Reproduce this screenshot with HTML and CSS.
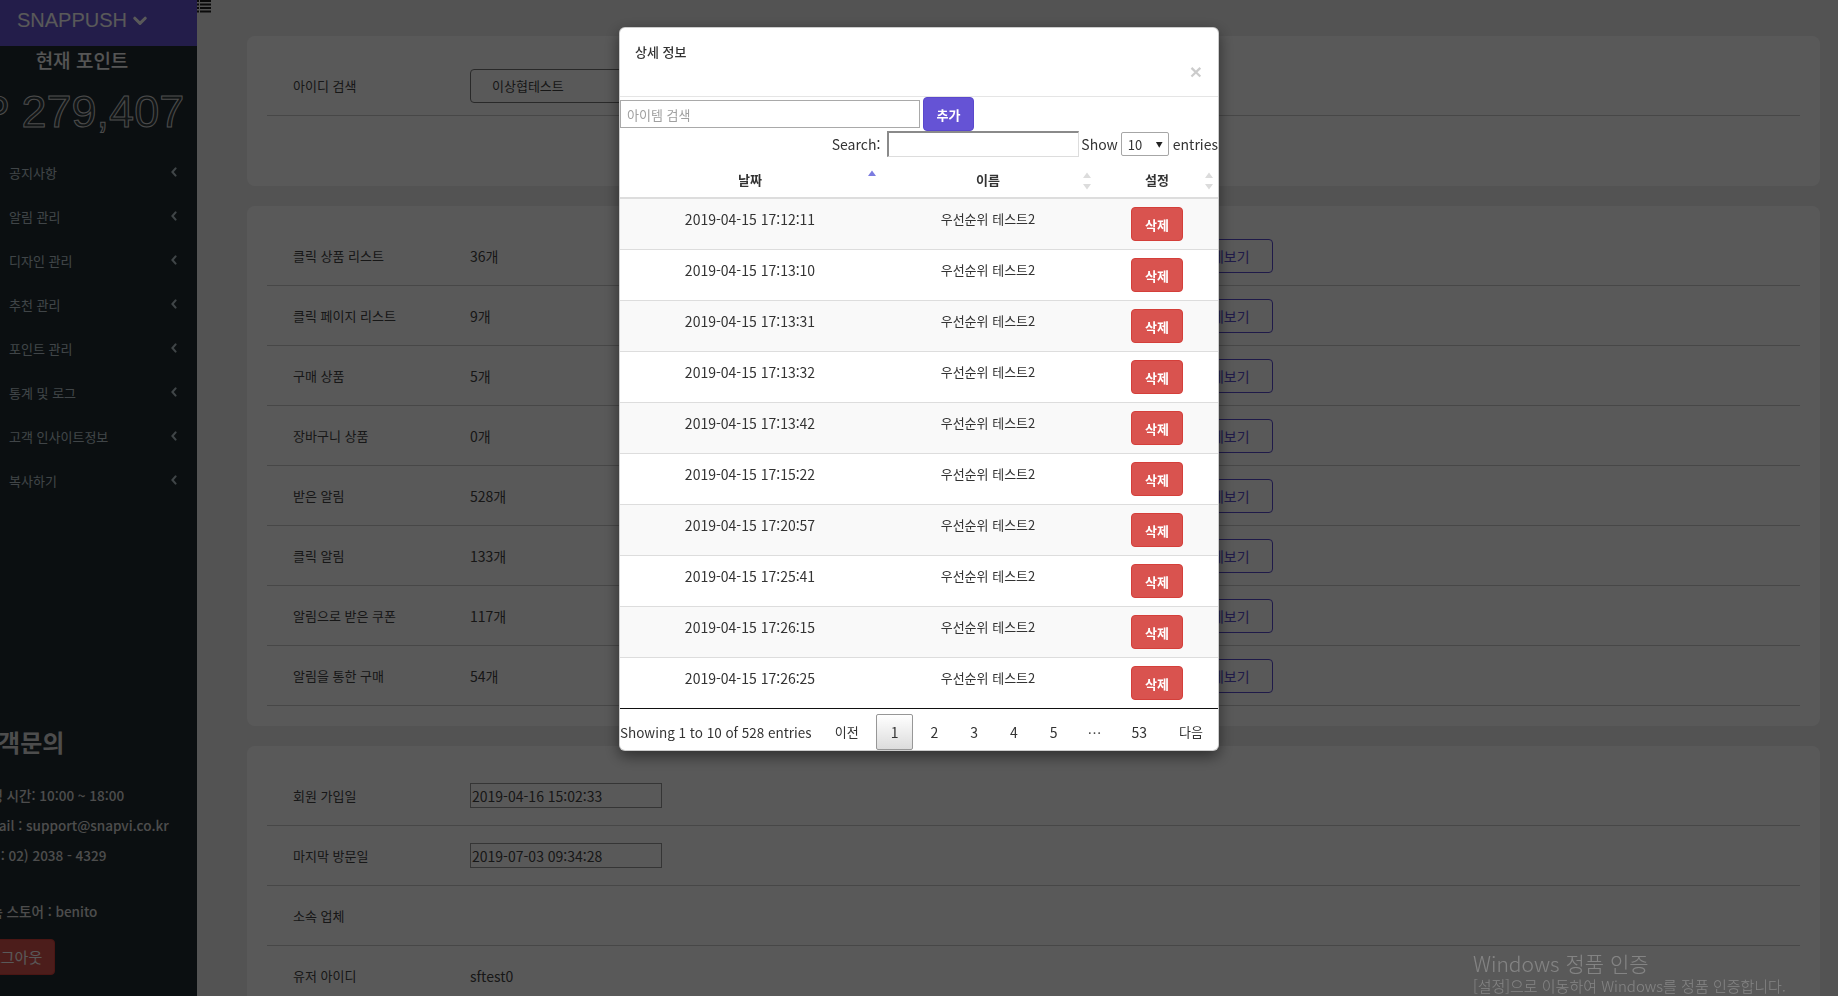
FILE: index.html
```html
<!DOCTYPE html>
<html lang="ko">
<head>
<meta charset="utf-8">
<title>SNAPPUSH</title>
<link rel="stylesheet" href="styles.css">
</head>
<body>
<div class="app">
  <aside class="sidebar">
    <div class="sidebar-inner">
      <div class="brand"><span>SNAPPUSH</span><svg class="caret" width="14" height="10" viewBox="0 0 14 10"><path d="M1.8 2.2 L7 7.4 L12.2 2.2" fill="none" stroke="currentColor" stroke-width="3" stroke-linecap="round" stroke-linejoin="round"/></svg></div>
      <div class="point-title">현재 포인트</div>
      <div class="point-value">P 279,407</div>
      <ul class="menu">
        <li><span>공지사항</span><svg viewBox="0 0 6 10"><path d="M4.6 1.4 L1.4 5 L4.6 8.6" fill="none" stroke="currentColor" stroke-width="2" stroke-linecap="round"/></svg></li>
        <li><span>알림 관리</span><svg viewBox="0 0 6 10"><path d="M4.6 1.4 L1.4 5 L4.6 8.6" fill="none" stroke="currentColor" stroke-width="2" stroke-linecap="round"/></svg></li>
        <li><span>디자인 관리</span><svg viewBox="0 0 6 10"><path d="M4.6 1.4 L1.4 5 L4.6 8.6" fill="none" stroke="currentColor" stroke-width="2" stroke-linecap="round"/></svg></li>
        <li><span>추천 관리</span><svg viewBox="0 0 6 10"><path d="M4.6 1.4 L1.4 5 L4.6 8.6" fill="none" stroke="currentColor" stroke-width="2" stroke-linecap="round"/></svg></li>
        <li><span>포인트 관리</span><svg viewBox="0 0 6 10"><path d="M4.6 1.4 L1.4 5 L4.6 8.6" fill="none" stroke="currentColor" stroke-width="2" stroke-linecap="round"/></svg></li>
        <li><span>통계 및 로그</span><svg viewBox="0 0 6 10"><path d="M4.6 1.4 L1.4 5 L4.6 8.6" fill="none" stroke="currentColor" stroke-width="2" stroke-linecap="round"/></svg></li>
        <li><span>고객 인사이트정보</span><svg viewBox="0 0 6 10"><path d="M4.6 1.4 L1.4 5 L4.6 8.6" fill="none" stroke="currentColor" stroke-width="2" stroke-linecap="round"/></svg></li>
        <li><span>복사하기</span><svg viewBox="0 0 6 10"><path d="M4.6 1.4 L1.4 5 L4.6 8.6" fill="none" stroke="currentColor" stroke-width="2" stroke-linecap="round"/></svg></li>
      </ul>
      <div class="contact">
        <h3>고객문의</h3>
        <p class="hours">운영 시간: 10:00 ~ 18:00</p>
        <p>Email : support@snapvi.co.kr</p>
        <p>Tel : 02) 2038 - 4329</p>
        <p class="store">소속 스토어 : benito</p>
        <button class="logout" type="button">로그아웃</button>
      </div>
    </div>
  </aside>

  <main class="main">
    <div class="toggle">
      <svg width="14" height="13" viewBox="0 0 14 13"><g fill="#222"><rect x="0" y="0" width="2" height="2"/><rect x="3" y="0" width="11" height="2"/><rect x="0" y="3.5" width="2" height="2"/><rect x="3" y="3.5" width="11" height="2"/><rect x="0" y="7" width="2" height="2"/><rect x="3" y="7" width="11" height="2"/><rect x="0" y="10.5" width="2" height="2"/><rect x="3" y="10.5" width="11" height="2"/></g></svg>
    </div>
    <div class="cards">
      <section class="card card-search">
        <div class="row">
          <div class="label">아이디 검색</div>
          <div class="value"><div class="id-box">이상협테스트</div></div>
        </div>
      </section>

      <section class="card">
        <div class="row"><div class="label">클릭 상품 리스트</div><div class="value">36개</div><button class="btn-detail" type="button">상세보기</button></div>
        <div class="row"><div class="label">클릭 페이지 리스트</div><div class="value">9개</div><button class="btn-detail" type="button">상세보기</button></div>
        <div class="row"><div class="label">구매 상품</div><div class="value">5개</div><button class="btn-detail" type="button">상세보기</button></div>
        <div class="row"><div class="label">장바구니 상품</div><div class="value">0개</div><button class="btn-detail" type="button">상세보기</button></div>
        <div class="row"><div class="label">받은 알림</div><div class="value">528개</div><button class="btn-detail" type="button">상세보기</button></div>
        <div class="row"><div class="label">클릭 알림</div><div class="value">133개</div><button class="btn-detail" type="button">상세보기</button></div>
        <div class="row"><div class="label">알림으로 받은 쿠폰</div><div class="value">117개</div><button class="btn-detail" type="button">상세보기</button></div>
        <div class="row"><div class="label">알림을 통한 구매</div><div class="value">54개</div><button class="btn-detail" type="button">상세보기</button></div>
      </section>

      <section class="card">
        <div class="row"><div class="label">회원 가입일</div><div class="value"><div class="date-box">2019-04-16 15:02:33</div></div></div>
        <div class="row"><div class="label">마지막 방문일</div><div class="value"><div class="date-box">2019-07-03 09:34:28</div></div></div>
        <div class="row"><div class="label">소속 업체</div><div class="value"></div></div>
        <div class="row"><div class="label">유저 아이디</div><div class="value">sftest0</div></div>
      </section>
    </div>
  </main>
</div>

<div class="backdrop"></div>

<div class="modal-layer">
  <div class="modal-content">
    <div class="modal-header">
      <div class="modal-title">상세 정보</div>
      <div class="close">×</div>
    </div>
    <div class="item-row">
      <div class="item-input">아이템 검색</div>
      <button class="btn-add" type="button">추가</button>
    </div>
    <div class="dt-controls">
      <span class="dt-label">Search:</span>
      <span class="dt-search"></span>
      <span class="dt-show">Show</span>
      <span class="dt-select"><span>10</span><span class="tri">▼</span></span>
      <span class="dt-entries">entries</span>
    </div>
    <table class="dt">
      <thead>
        <tr>
          <th class="c-date">날짜<svg class="sort" width="8" height="18" viewBox="0 0 8 18"><path d="M0 6 L4 0.5 L8 6 Z" fill="#7b7be0"/></svg></th>
          <th class="c-name">이름<svg class="sort" width="8" height="18" viewBox="0 0 8 18"><path d="M0 6 L4 0.5 L8 6 Z" fill="#dcdcdc"/><path d="M0 12 L8 12 L4 17.5 Z" fill="#dcdcdc"/></svg></th>
          <th class="c-set">설정<svg class="sort" width="8" height="18" viewBox="0 0 8 18"><path d="M0 6 L4 0.5 L8 6 Z" fill="#dcdcdc"/><path d="M0 12 L8 12 L4 17.5 Z" fill="#dcdcdc"/></svg></th>
        </tr>
      </thead>
      <tbody>
        <tr><td>2019-04-15 17:12:11</td><td>우선순위 테스트2</td><td><button class="btn-del" type="button">삭제</button></td></tr>
        <tr><td>2019-04-15 17:13:10</td><td>우선순위 테스트2</td><td><button class="btn-del" type="button">삭제</button></td></tr>
        <tr><td>2019-04-15 17:13:31</td><td>우선순위 테스트2</td><td><button class="btn-del" type="button">삭제</button></td></tr>
        <tr><td>2019-04-15 17:13:32</td><td>우선순위 테스트2</td><td><button class="btn-del" type="button">삭제</button></td></tr>
        <tr><td>2019-04-15 17:13:42</td><td>우선순위 테스트2</td><td><button class="btn-del" type="button">삭제</button></td></tr>
        <tr><td>2019-04-15 17:15:22</td><td>우선순위 테스트2</td><td><button class="btn-del" type="button">삭제</button></td></tr>
        <tr><td>2019-04-15 17:20:57</td><td>우선순위 테스트2</td><td><button class="btn-del" type="button">삭제</button></td></tr>
        <tr><td>2019-04-15 17:25:41</td><td>우선순위 테스트2</td><td><button class="btn-del" type="button">삭제</button></td></tr>
        <tr><td>2019-04-15 17:26:15</td><td>우선순위 테스트2</td><td><button class="btn-del" type="button">삭제</button></td></tr>
        <tr><td>2019-04-15 17:26:25</td><td>우선순위 테스트2</td><td><button class="btn-del" type="button">삭제</button></td></tr>
      </tbody>
    </table>
    <div class="dt-footer">
      <div class="dt-info">Showing 1 to 10 of 528 entries</div>
      <div class="pager">
        <span class="pg ko">이전</span>
        <span class="pg current">1</span>
        <span class="pg">2</span>
        <span class="pg">3</span>
        <span class="pg">4</span>
        <span class="pg">5</span>
        <span class="pg ellipsis">…</span>
        <span class="pg">53</span>
        <span class="pg ko">다음</span>
      </div>
    </div>
  </div>
</div>

<div class="activation">
  <div class="act-title">Windows 정품 인증</div>
  <div class="act-sub">[설정]으로 이동하여 Windows를 정품 인증합니다.</div>
</div>
</body>
</html>
```

FILE: styles.css
```css
* { box-sizing: border-box; }

html, body {
  margin: 0;
  padding: 0;
}

body {
  width: 1838px;
  height: 996px;
  overflow: hidden;
  background: #eeeeee;
  color: #333;
  font-family: "Noto Sans CJK KR", "Noto Sans", sans-serif;
}

.app {
  display: flex;
  height: 996px;
}

/* ---------- Sidebar ---------- */
.sidebar {
  width: 197px;
  flex: none;
  background: #222d32;
  overflow: hidden;
}

.sidebar-inner {
  width: 230px;
  margin-left: -33px;
}

.brand {
  height: 46px;
  background: #6654d4;
  color: #fff;
  display: flex;
  align-items: center;
  justify-content: center;
  gap: 6px;
  padding-bottom: 5px;
  font-family: "Liberation Sans", Arial, sans-serif;
  font-size: 20px;
}

.caret { display: block; }

.point-title {
  margin-top: 1px;
  text-align: center;
  font-size: 19px;
  font-weight: 500;
  line-height: 26px;
  color: #f2f2f2;
}

.point-value {
  margin-top: 13px;
  text-align: center;
  white-space: nowrap;
  font-family: "Liberation Sans", Arial, sans-serif;
  font-size: 45px;
  line-height: 52px;
  color: rgba(255, 255, 255, 0.08);
  -webkit-text-stroke: 1px #d8d8d8;
}

.menu {
  list-style: none;
  margin: 12px 0 0;
  padding: 0;
}

.menu li {
  height: 44px;
  display: flex;
  align-items: center;
  justify-content: space-between;
  padding: 0 20px 0 42px;
  font-size: 13px;
  color: #b8c7ce;
}

.menu svg {
  width: 6px;
  height: 10px;
  display: block;
}

.contact {
  margin-top: 225px;
  padding-left: 11px;
  color: #dddddd;
  white-space: nowrap;
}

.contact h3 {
  margin: 0 0 0 -2px;
  font-size: 24px;
  line-height: 30px;
  font-weight: 700;
}

.contact p {
  margin: 8px 0 0;
  font-size: 13.5px;
  line-height: 22px;
  font-weight: 500;
}

.contact p.hours { margin-top: 27px; }
.contact p.store { margin-top: 34px; }

.logout {
  display: block;
  margin-top: 17px;
  padding: 7px 12px 7px 8px;
  background: #d9534f;
  border: 1px solid #d43f3a;
  border-radius: 4px;
  color: #fff;
  font-family: inherit;
  font-size: 15px;
  line-height: 20px;
}

/* ---------- Main ---------- */
.main {
  flex: 1;
  min-width: 0;
}

.toggle {
  height: 36px;
}

.toggle svg { display: block; }

.cards {
  margin: 0 18px 0 50px;
  display: flex;
  flex-direction: column;
  gap: 20px;
}

.card {
  background: #fff;
  border-radius: 8px;
  padding: 20px;
}

.card-search { padding-bottom: 70px; }

.row {
  height: 60px;
  display: flex;
  align-items: center;
  padding-left: 26px;
  border-bottom: 1px solid #cccccc;
  font-size: 14px;
  color: #444;
}

.label {
  width: 177px;
  flex: none;
  font-size: 13px;
}

.value {
  width: 705px;
  flex: none;
}

.id-box {
  width: 300px;
  height: 34px;
  display: flex;
  align-items: center;
  padding-left: 21px;
  border: 1px solid #777;
  border-radius: 4px;
  font-size: 13px;
  color: #444;
}

.date-box {
  width: 192px;
  height: 25px;
  display: flex;
  align-items: center;
  padding-left: 1px;
  border: 1px solid #999;
  font-size: 14px;
  color: #444;
}

.btn-detail {
  height: 34px;
  padding: 0 22px;
  background: #fff;
  border: 1px solid #5a4bd0;
  border-radius: 4px;
  color: #5a4bd0;
  font-family: inherit;
  font-size: 14px;
}

/* ---------- Backdrop & modal ---------- */
.backdrop {
  position: fixed;
  inset: 0;
  background: rgba(0, 0, 0, 0.65);
  z-index: 10;
}

.modal-layer {
  position: fixed;
  inset: 0;
  z-index: 20;
}

.modal-content {
  width: 600px;
  margin: 27px auto 0;
  background: #fff;
  border: 1px solid rgba(0, 0, 0, 0.2);
  border-radius: 6px;
  box-shadow: 0 5px 15px rgba(0, 0, 0, 0.5);
  overflow: hidden;
}

.modal-header {
  padding: 14px 15px 14px;
  border-bottom: 1px solid #e5e5e5;
}

.modal-title {
  font-size: 13px;
  line-height: 20px;
  font-weight: 500;
  color: #333;
}

.close {
  text-align: right;
  font-family: "Liberation Sans", Arial, sans-serif;
  font-size: 21px;
  font-weight: 700;
  line-height: 20px;
  color: #000;
  opacity: 0.2;
  padding-right: 1px;
}

.item-row {
  display: flex;
  align-items: flex-start;
}

.item-input {
  width: 300px;
  height: 28px;
  margin-top: 3px;
  padding-left: 6px;
  display: flex;
  align-items: center;
  border: 1px solid #a9a9a9;
  font-size: 13px;
  color: #a0a0a0;
}

.btn-add {
  margin-left: 3px;
  width: 51px;
  height: 34px;
  padding: 0;
  background: #6553d5;
  border: 1px solid #5a48cc;
  border-radius: 4px;
  color: #fff;
  font-family: inherit;
  font-size: 13px;
  font-weight: 700;
}

.dt-controls {
  height: 26px;
  display: flex;
  align-items: center;
  justify-content: flex-end;
  font-size: 14px;
  color: #333;
  white-space: nowrap;
}

.dt-search {
  width: 192px;
  height: 26px;
  margin-left: 7px;
  border-style: solid;
  border-width: 2px 1px 1px 2px;
  border-color: #8a8a8a #dddddd #dddddd #8a8a8a;
}

.dt-show { margin-left: 2px; }

.dt-select {
  width: 48px;
  height: 24px;
  margin-left: 3px;
  padding: 0 5px 0 6px;
  display: flex;
  align-items: center;
  justify-content: space-between;
  border: 1px solid #a6a6a6;
  border-radius: 2px;
  font-size: 13px;
}

.dt-select .tri {
  font-size: 7px;
  color: #222;
}

.dt-entries { margin-left: 4px; }

.dt {
  width: 100%;
  border-collapse: separate;
  border-spacing: 0;
  table-layout: fixed;
}

.dt th {
  position: relative;
  padding: 13px 10px 7px;
  line-height: 20px;
  font-size: 13px;
  font-weight: 700;
  text-align: center;
  color: #333;
  border-bottom: 2px solid #dddddd;
}

.dt th.c-date { width: 260px; }
.dt th.c-name { width: 216px; }

.dt .sort {
  position: absolute;
  top: 15px;
  right: 5px;
}

.dt th.c-date .sort { right: 4px; top: 13px; }

.dt td {
  padding: 10px 10px 8px;
  line-height: 20px;
  vertical-align: top;
  text-align: center;
  font-size: 14px;
  color: #333;
  border-bottom: 1px solid #dddddd;
  white-space: nowrap;
}

.dt td:nth-child(2) { font-size: 13px; }

.dt td:nth-child(3) { padding-top: 8px; }

.dt tbody tr:nth-child(odd) td { background: #f9f9f9; }

.dt tbody tr:last-child td { border-bottom: 1px solid #111; }

.btn-del {
  width: 52px;
  height: 34px;
  padding: 0;
  background: #d9534f;
  border: 1px solid #d43f3a;
  border-radius: 4px;
  color: #fff;
  font-family: inherit;
  font-size: 13px;
  font-weight: 700;
  vertical-align: top;
}

.dt-footer {
  display: flex;
  justify-content: space-between;
  align-items: center;
  padding-top: 5px;
  white-space: nowrap;
}

.dt-info {
  font-size: 13.5px;
  color: #333;
  flex: none;
}

.pager {
  display: flex;
  align-items: center;
  flex: none;
}

.pg {
  margin-left: 2px;
  padding: 7px 14px;
  border: 1px solid transparent;
  border-radius: 2px;
  font-size: 14px;
  line-height: 20px;
  color: #333;
}

.pg.ko { font-size: 13px; }

.pg.ellipsis { padding: 7px 12px; }

.pg.current {
  border-color: #979797;
  background: linear-gradient(to bottom, #ffffff 0%, #dcdcdc 100%);
}

/* ---------- Windows activation watermark ---------- */
.activation {
  position: fixed;
  left: 1473px;
  top: 950px;
  z-index: 30;
  color: rgba(255, 255, 255, 0.26);
  white-space: nowrap;
  font-weight: 300;
}

.act-title {
  font-size: 21px;
  line-height: 26px;
}

.act-sub {
  font-size: 15px;
  line-height: 20px;
}
```
